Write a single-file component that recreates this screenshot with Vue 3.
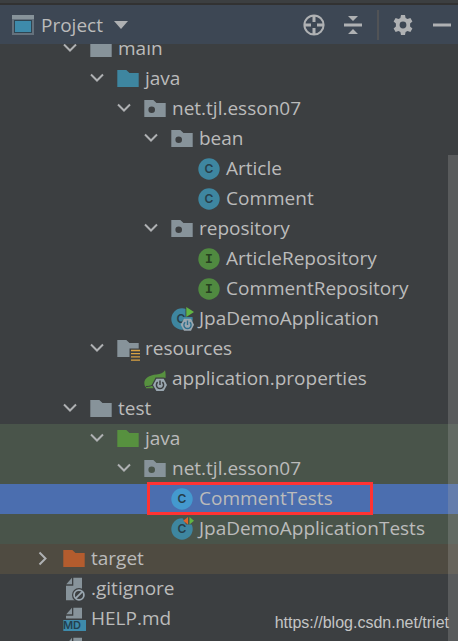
<script setup>
import { ref } from 'vue'

const rows = [
    { depth: 1, arrow: 'down', icon: 'folder', name: 'main' },
    { depth: 2, arrow: 'down', icon: 'folder', tone: 'source', name: 'java' },
    { depth: 3, arrow: 'down', icon: 'package', name: 'net.tjl.esson07' },
    { depth: 4, arrow: 'down', icon: 'package', name: 'bean' },
    { depth: 5, icon: 'class', name: 'Article' },
    { depth: 5, icon: 'class', name: 'Comment' },
    { depth: 4, arrow: 'down', icon: 'package', name: 'repository' },
    { depth: 5, icon: 'interface', name: 'ArticleRepository' },
    { depth: 5, icon: 'interface', name: 'CommentRepository' },
    { depth: 4, icon: 'boot', name: 'JpaDemoApplication' },
    { depth: 2, arrow: 'down', icon: 'resources', name: 'resources' },
    { depth: 3, icon: 'spring', name: 'application.properties' },
    { depth: 1, arrow: 'down', icon: 'folder', name: 'test' },
    { depth: 2, arrow: 'down', icon: 'folder', tone: 'tests', scope: 'test', name: 'java' },
    { depth: 3, arrow: 'down', icon: 'package', scope: 'test', name: 'net.tjl.esson07' },
    { depth: 4, icon: 'class', scope: 'test', name: 'CommentTests', marked: true },
    { depth: 4, icon: 'testClass', scope: 'test', name: 'JpaDemoApplicationTests' },
    { depth: 0, arrow: 'right', icon: 'folder', tone: 'excluded', scope: 'excluded', name: 'target' },
    { depth: 0, icon: 'ignore', name: '.gitignore' },
    { depth: 0, icon: 'markdown', name: 'HELP.md' },
    { depth: 0, icon: 'file', name: '' },
]

const selected = ref(15)
</script>

<template>
    <div class="tool-window">
        <header class="toolbar">
            <button class="view-switch" type="button">
                <svg width="22" height="20" viewBox="0 0 22 20">
                    <path d="M0 0h22v20H0z" fill="#65717c" />
                    <path d="M0 0h22v4H0z" fill="#87939a" />
                    <path d="M2 5h18v13H2z" fill="#2f4552" />
                    <path d="M3 6h16v11H3z" fill="#3e8bab" />
                </svg>
                <span class="view-name">Project</span>
                <svg width="14" height="8" viewBox="0 0 14 8">
                    <path d="M0 0h14L7 8z" fill="#afb1b3" />
                </svg>
            </button>
            <div class="actions">
                <button class="action" type="button" aria-label="Select opened file">
                    <svg width="22" height="22" viewBox="0 0 22 22" fill="none" stroke="#afb1b3">
                        <circle cx="11" cy="11" r="9.6" stroke-width="2" />
                        <path d="M11 2v6M11 14v6M2 11h6M14 11h6" stroke-width="3" />
                    </svg>
                </button>
                <button class="action" type="button" aria-label="Collapse all">
                    <svg width="22" height="22" viewBox="0 0 22 22" fill="#afb1b3">
                        <path d="M6 2h10l-5 5zM2 9.500h18v3H2zM11 15l5 5H6z" />
                    </svg>
                </button>
                <span class="divider"></span>
                <button class="action" type="button" aria-label="Options">
                    <svg width="22" height="22" viewBox="0 0 22 22">
                        <path
                            fill="#afb1b3" fill-rule="evenodd"
                            d="M9 1h4l.6 3 1.900 1.100L18.400 4l2 3.500-2.300 2.100v2.800l2.300 2.100-2 3.500-2.900-1-1.900 1.100-.6 2.900H9l-.6-2.900-1.900-1.100-2.900 1-2-3.500 2.300-2.100V9.600L1.600 7.500l2-3.500 2.900 1.100L8.400 4zM11 7.600a3.400 3.400 0 1 0 0 6.800a3.400 3.400 0 1 0 0-6.800z" />
                    </svg>
                </button>
                <button class="action" type="button" aria-label="Hide">
                    <svg width="22" height="22" viewBox="0 0 22 22">
                        <path d="M2 9.500h18v3H2z" fill="#afb1b3" />
                    </svg>
                </button>
            </div>
        </header>

        <main class="tree-view">
            <ul class="tree">
                <li
                    v-for="(row, index) in rows" :key="index" class="row"
                    :class="[row.scope, { selected: selected === index }]"
                    :style="{ '--depth': row.depth }" @click="selected = index">
                    <button v-if="row.arrow" class="arrow" type="button" :aria-label="'Toggle ' + row.name">
                        <svg width="20" height="20" viewBox="0 0 20 20" fill="none" stroke="#afb1b3" stroke-width="2">
                            <path v-if="row.arrow === 'down'" d="M5 5.500l6 6 6-6" />
                            <path v-else d="M7.500 3.500l6 6-6 6" />
                        </svg>
                    </button>
                    <span v-else class="arrow"></span>

                    <svg class="icon" :class="row.tone" width="24" height="24" viewBox="0 0 24 24">
                        <path v-if="row.icon === 'folder'" class="shape" d="M1.300 3h9l3.200 3h9.200v14H1.300z" />

                        <path
                            v-else-if="row.icon === 'package'" class="shape" fill-rule="evenodd"
                            d="M1.300 3h9l3.200 3h9.200v14H1.300zM8.700 9.400a3.300 3.300 0 1 0 0 6.600a3.300 3.300 0 1 0 0-6.600z" />

                        <g v-else-if="row.icon === 'resources'">
                            <path class="shape" d="M1.300 3h9l3.200 3h9.200v5.500H13.500V20H1.300z" />
                            <path d="M15 13.500h9M15 16.700h9M15 19.900h9M15 23.100h9" stroke="#d9a343" stroke-width="1.300" />
                        </g>

                        <g v-else-if="row.icon === 'class' || row.icon === 'testClass'">
                            <circle class="disc" cx="12" cy="12" r="10.700" />
                            <text class="letter" x="12" y="16" text-anchor="middle">C</text>
                            <g v-if="row.icon === 'testClass'">
                                <path d="M12 0h12v7.500H16z" fill="#49544a" />
                                <path d="M18 0v7.500L13.300 3.700z" fill="#e0662c" />
                                <path d="M19.500 0v7.500L24 3.700z" fill="#62b543" />
                            </g>
                        </g>

                        <g v-else-if="row.icon === 'interface'">
                            <circle cx="12" cy="12" r="10.700" fill="#508a40" />
                            <text class="letter slab" x="12" y="16" text-anchor="middle">I</text>
                        </g>

                        <g v-else-if="row.icon === 'boot'">
                            <circle class="disc" cx="12" cy="12" r="10.700" />
                            <text class="letter" x="11" y="16" text-anchor="middle">C</text>
                            <path d="M15.500 0H24v10h-8.500z" fill="#3c3f41" />
                            <path d="M16.300 0L24 5l-7.700 5z" fill="#62b543" />
                            <path d="M14 11.700h7l3 6-3 6h-7l-3.300-6z" fill="#9aa7b0" />
                            <path
                                d="M15.200 15.200a3.600 3.600 0 1 0 4.600 0M17.500 13.500v4.500" fill="none" stroke="#2f6f8c"
                                stroke-width="1.400" />
                        </g>

                        <g v-else-if="row.icon === 'spring'">
                            <path
                                fill="#57913f"
                                d="M22 3.300c-1.700 2.700-4.500 3.700-8.500 4.100C6 8 1.300 11 1.300 16.200c0 1.800.7 3.200 1.900 4.300l-.4.800h8L14 11h8.500c.3-2.500.2-5-.5-7.700z" />
                            <path d="M3 19.500c3 .2 6-.8 8-2.500" fill="none" stroke="#3c3f41" />
                            <path d="M12.600 10.500h8.800L25 18l-4 6.500h-8.400L8.700 18z" fill="#3c3f41" />
                            <path d="M13.400 11.700h7.300l3.300 6.200-3.300 6.100h-7.300l-3.400-6.100z" fill="#9aa7b0" />
                            <path
                                d="M14.700 15.200a3.600 3.600 0 1 0 4.600 0M17 13.500v4.500" fill="none" stroke="#3c3f41"
                                stroke-width="1.500" />
                        </g>

                        <g v-else>
                            <path class="shape" d="M10 .8v6.500H4.300z" />
                            <path class="shape" d="M11.300.8H20v22.500H4V8.800h7.300z" />
                            <g v-if="row.icon === 'ignore'" fill="none">
                                <circle cx="17" cy="18" r="7" fill="#3c3f41" />
                                <circle cx="17" cy="18" r="4.900" stroke="#9aa7b0" stroke-width="1.800" />
                                <path d="M13.600 21.400l6.800-6.800" stroke="#9aa7b0" stroke-width="1.800" />
                            </g>
                            <g v-if="row.icon === 'markdown'">
                                <path d="M1 11.500h23V24H1z" fill="#3c3f41" />
                                <path d="M1.300 13H24v11H1.300z" fill="#3e8bab" />
                                <text class="badge" x="10" y="22" text-anchor="middle">MD</text>
                            </g>
                        </g>
                    </svg>

                    <span class="name">{{ row.name }}</span>
                    <span v-if="row.marked" class="marker"></span>
                </li>
            </ul>
            <div class="scrollbar"></div>
            <p class="watermark">https://blog.csdn.net/triet</p>
        </main>
    </div>
</template>

<style>
body {
    margin: 0;
    background: #3c3f41;
}
</style>

<style scoped>
.tool-window {
    height: 100vh;
    display: flex;
    flex-direction: column;
    overflow: hidden;
    background: #3c3f41;
    color: #bbbbbb;
    font-family: "Open Sans", "Noto Sans", sans-serif;
    font-size: 19px;
}

button {
    padding: 0;
    border: 0;
    background: none;
    color: inherit;
    font: inherit;
    cursor: pointer;
}

svg {
    display: block;
    flex: none;
}

.toolbar {
    flex: none;
    height: 39px;
    margin-top: 3px;
    padding: 0 5px 0 12px;
    border-top: 2px solid #323232;
    box-sizing: content-box;
    display: flex;
    align-items: center;
    justify-content: space-between;
    background: #3d4754;
}

.view-switch {
    display: flex;
    align-items: center;
    gap: 7px;
}

.view-name {
    margin-right: 4px;
    line-height: 30px;
}

.actions {
    display: flex;
    align-items: center;
    gap: 17px;
}

.divider {
    width: 2px;
    height: 30px;
    margin: 0 -4px;
    background: #515356;
}

.tree-view {
    position: relative;
    flex: 1;
    min-height: 0;
    overflow: hidden;
}

.tree {
    margin: -10px 0 0;
    padding: 0;
    list-style: none;
}

.row {
    position: relative;
    height: 30px;
    padding-left: calc(32px + var(--depth) * 27px);
    display: flex;
    align-items: center;
    cursor: default;
}

.row.test {
    background: #49544a;
}

.row.excluded {
    background: #4f4b41;
}

.row.selected {
    background: #4b6eaf;
}

.arrow {
    flex: none;
    width: 20px;
    height: 20px;
}

.icon {
    margin: 0 5px 0 10px;
}

.shape {
    fill: #87939a;
}

.source .shape {
    fill: #3e86a0;
}

.tests .shape {
    fill: #57913f;
}

.icon.excluded .shape {
    fill: #b35c2e;
}

.disc {
    fill: #3e86a0;
}

.selected .disc {
    fill: #4499cf;
}

.letter {
    fill: #263f4b;
    font: 600 12px Inter, sans-serif;
}

.slab {
    fill: #26401f;
    font: bold 13px "Liberation Mono", monospace;
}

.badge {
    fill: #23414f;
    font: 600 11px Inter, sans-serif;
}

.name {
    align-self: flex-start;
    line-height: 28px;
    white-space: nowrap;
}

/* red frame drawn over the row */
.marker {
    position: absolute;
    top: -2px;
    left: 147px;
    width: 226px;
    height: 33px;
    box-sizing: border-box;
    border: 3px solid #ff3333;
    z-index: 1;
}

.scrollbar {
    position: absolute;
    top: 111px;
    right: 0;
    bottom: 0;
    width: 10px;
    background: rgba(166, 166, 166, 0.28);
}

.watermark {
    position: absolute;
    right: 9px;
    bottom: 8px;
    margin: 0;
    color: #c4c5c5;
    font: 16px/20px "Liberation Sans", sans-serif;
}
</style>
